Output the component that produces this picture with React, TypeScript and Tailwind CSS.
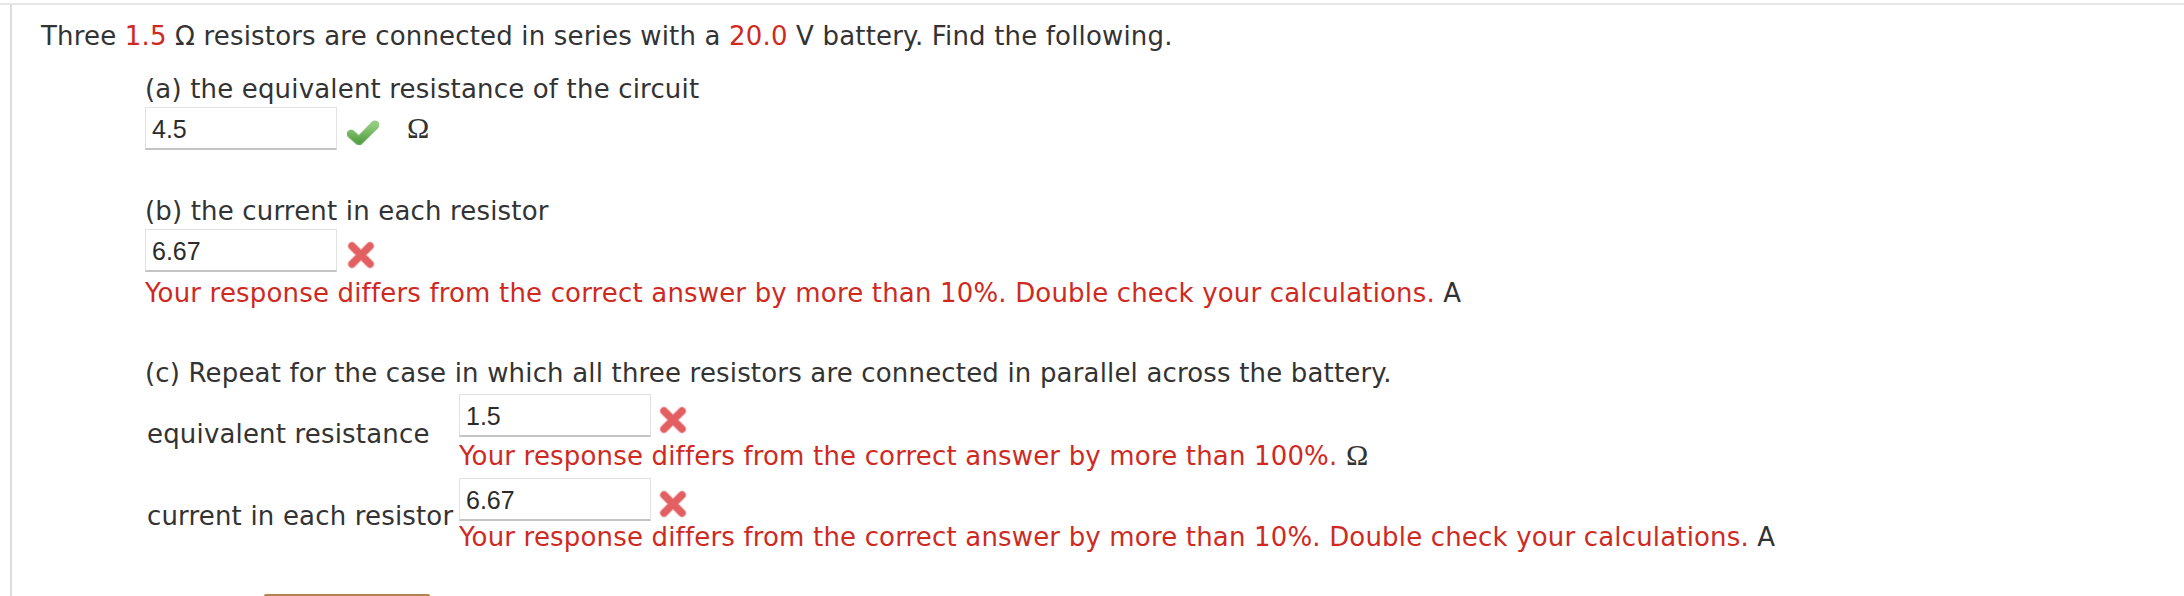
import React from "react";

const sans = { fontFamily: '"DejaVu Sans", Verdana, sans-serif' };

function Check() {
  return (
    <svg width="32" height="25" viewBox="0 0 32 25" className="shrink-0">
      <defs>
        <linearGradient id="cg" x1="0" y1="0" x2="0" y2="1">
          <stop offset="0" stopColor="#8fcd7c" />
          <stop offset="1" stopColor="#58a246" />
        </linearGradient>
      </defs>
      <path d="M4 14 L12 21 L28 5" fill="none" stroke="#4f9440" strokeWidth="9" strokeLinecap="round" strokeLinejoin="round" opacity="0.55" />
      <path d="M4 14 L12 21 L28 5" fill="none" stroke="url(#cg)" strokeWidth="7.5" strokeLinecap="round" strokeLinejoin="round" />
    </svg>
  );
}

function Cross() {
  return (
    <svg width="28" height="28" viewBox="0 0 28 28" className="shrink-0">
      <path d="M5 5 L23 23 M23 5 L5 23" fill="none" stroke="#f0a0a0" strokeWidth="9" strokeLinecap="round" opacity="0.6" />
      <path d="M5 5 L23 23 M23 5 L5 23" fill="none" stroke="#e25f62" strokeWidth="7" strokeLinecap="round" />
    </svg>
  );
}

function Input({ value }: { value: string }) {
  return (
    <div
      className="w-[192px] h-[43px] shrink-0 border border-[#e2e2e2] border-b-2 border-b-[#c4c4c4] bg-white flex items-center pl-[6px] pt-[3px] text-[25px] tracking-normal text-[#2b2b2b]"
      style={{ fontFamily: '"Liberation Sans", Arial, sans-serif' }}
    >
      {value}
    </div>
  );
}

function Omega() {
  return (
    <span className="text-[30px] tracking-normal text-[#333]" style={{ fontFamily: '"Liberation Serif", "Times New Roman", serif' }}>
      Ω
    </span>
  );
}

const Red = ({ children }: { children: React.ReactNode }) => <span className="text-[#cf2a1f]">{children}</span>;

export default function App() {
  return (
    <div className="w-[2184px] h-[596px] overflow-hidden bg-white text-[#333] text-[26px] leading-[35px] tracking-[0.17px]" style={sans}>
      <div className="pt-[3px]">
        <div className="border-t-2 border-[#e6e6e6] flex">
          <div className="w-[10px] shrink-0" />
          <div className="flex-1 border-l-2 border-[#dddddd] pl-[29px] pt-[14px] h-[620px]">
            <p>
              Three <Red>1.5</Red> Ω resistors are connected in series with a <Red>20.0</Red> V battery. Find the following.
            </p>
            <div className="ml-[104px] mt-[18px]">
              <div>(a) the equivalent resistance of the circuit</div>
              <div className="flex items-center">
                <Input value="4.5" />
                <div className="ml-[10px] mt-[8px]">
                  <Check />
                </div>
                <div className="ml-[28px]">
                  <Omega />
                </div>
              </div>

              <div className="mt-[44px]">(b) the current in each resistor</div>
              <div className="flex items-center">
                <Input value="6.67" />
                <div className="ml-[10px] mt-[8px]">
                  <Cross />
                </div>
              </div>
              <div className="mt-[4px]">
                <Red>Your response differs from the correct answer by more than 10%. Double check your calculations.</Red> A
              </div>

              <div className="mt-[45px]">(c) Repeat for the case in which all three resistors are connected in parallel across the battery.</div>
              <div className="mt-[3px] grid grid-cols-[314px_auto] gap-y-[4px] w-max">
                <div className="flex items-center pl-[2px] whitespace-nowrap">equivalent resistance</div>
                <div>
                  <div className="flex items-center">
                    <Input value="1.5" />
                    <div className="ml-[8px] mt-[8px]">
                      <Cross />
                    </div>
                  </div>
                  <div className="whitespace-nowrap">
                    <Red>Your response differs from the correct answer by more than 100%.</Red> <Omega />
                  </div>
                </div>
                <div className="flex items-center pl-[2px] whitespace-nowrap">current in each resistor</div>
                <div>
                  <div className="flex items-center">
                    <Input value="6.67" />
                    <div className="ml-[8px] mt-[8px]">
                      <Cross />
                    </div>
                  </div>
                  <div className="whitespace-nowrap -mt-[1px]">
                    <Red>Your response differs from the correct answer by more than 10%. Double check your calculations.</Red> A
                  </div>
                </div>
              </div>
              <div className="ml-[119px] mt-[39px] w-[166px] h-[20px] border-t-[3px] border-[#b3834d] bg-[#f3e2c8] rounded-t-[2px]" />
            </div>
          </div>
        </div>
      </div>
    </div>
  );
}
